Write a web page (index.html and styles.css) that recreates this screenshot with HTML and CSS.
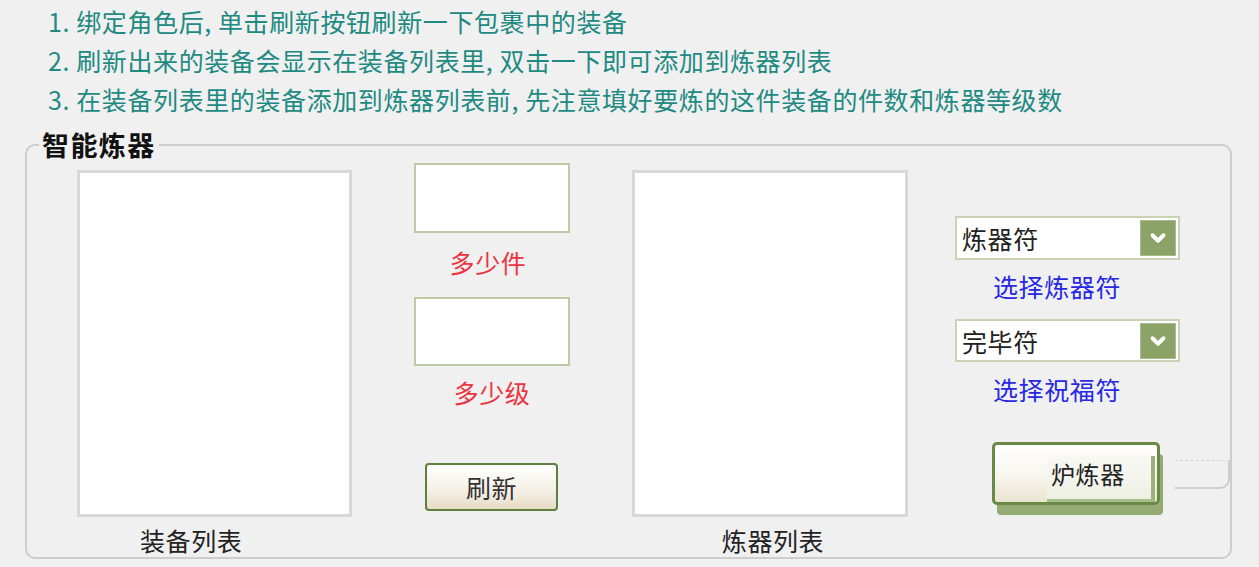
FILE: index.html
```html
<!DOCTYPE html>
<html lang="zh-CN">
<head>
<meta charset="utf-8">
<title>智能炼器</title>
<link rel="stylesheet" href="styles.css">
</head>
<body>
<div class="notes">
  <p>1. 绑定角色后, 单击刷新按钮刷新一下包裹中的装备</p>
  <p>2. 刷新出来的装备会显示在装备列表里, 双击一下即可添加到炼器列表</p>
  <p>3. 在装备列表里的装备添加到炼器列表前, 先注意填好要炼的这件装备的件数和炼器等级数</p>
</div>
<fieldset class="panel">
  <legend class="panel-title">智能炼器</legend>
  <div class="panel-body">
    <div class="col col-equip">
      <div class="listbox"></div>
      <div class="list-label label-equip">装备列表</div>
    </div>
    <div class="col col-count">
      <div class="textbox"></div>
      <div class="hint">多少件</div>
      <div class="textbox textbox-2"></div>
      <div class="hint hint-2">多少级</div>
      <button class="btn btn-refresh">刷新</button>
    </div>
    <div class="col col-refine">
      <div class="listbox"></div>
      <div class="list-label label-refine">炼器列表</div>
    </div>
    <div class="col col-options">
      <div class="select">
        <span class="select-text">炼器符</span>
        <span class="select-arrow"><svg viewBox="0 0 20 20" width="22" height="22"><polyline points="5,7.5 10,12.5 15,7.5" fill="none" stroke="#fff" stroke-width="3.6" stroke-linecap="round" stroke-linejoin="round"/></svg></span>
      </div>
      <div class="option-label">选择炼器符</div>
      <div class="select select-2">
        <span class="select-text">完毕符</span>
        <span class="select-arrow"><svg viewBox="0 0 20 20" width="22" height="22"><polyline points="5,7.5 10,12.5 15,7.5" fill="none" stroke="#fff" stroke-width="3.6" stroke-linecap="round" stroke-linejoin="round"/></svg></span>
      </div>
      <div class="option-label option-label-2">选择祝福符</div>
      <button class="btn btn-start"><span class="btn-start-text">炉炼器</span></button>
    </div>
  </div>
  <div class="ghost-corner"></div>
</fieldset>
</body>
</html>
```
FILE: styles.css
```css
html, body {
  margin: 0;
  padding: 0;
  background: #f0f0f0;
}
body {
  width: 1259px;
  height: 567px;
  overflow: hidden;
  font-family: "Noto Sans CJK SC", "Noto Sans", sans-serif;
  font-size: 25px;
  letter-spacing: 0.6px;
  color: #222;
}

.notes {
  padding: 2px 0 0 48px;
  color: #1e8a82;
}
.notes p {
  margin: 0;
  height: 39px;
  line-height: 39px;
  white-space: nowrap;
}

.panel {
  position: relative;
  margin: 11px 0 0 25px;
  width: 1207px;
  box-sizing: border-box;
  padding: 0;
  border: 2px solid #cdcdcd;
  border-radius: 10px;
  min-inline-size: 0;
}
.panel-title {
  margin-left: 12px;
  padding: 0 3px;
  font-size: 27px;
  font-weight: bold;
  line-height: 30px;
  letter-spacing: 1.4px;
  color: #111;
}

.panel-body {
  display: flex;
  align-items: flex-start;
  height: 397px;
}

.col {
  display: flex;
  flex-direction: column;
}

.listbox {
  box-sizing: border-box;
  height: 347px;
  background: #fff;
  border: 3px solid #d8d8d8;
}
.list-label {
  height: 26px;
  line-height: 26px;
  margin-top: 10px;
  white-space: nowrap;
}

.col-equip {
  margin: 10px 0 0 50px;
  width: 275px;
}
.label-equip {
  padding-left: 63px;
}

.col-count {
  margin: 3px 0 0 62px;
  width: 156px;
}
.textbox {
  box-sizing: border-box;
  height: 70px;
  background: #fff;
  border: 2px solid #bccaa6;
}
.textbox-2 {
  margin-top: 22px;
  height: 69px;
}
.hint {
  margin-top: 16px;
  height: 26px;
  line-height: 26px;
  text-align: center;
  color: #ec3340;
  padding-right: 8px;
}
.hint-2 {
  margin-top: 13px;
  padding-right: 0;
}

.btn {
  font-family: inherit;
  letter-spacing: inherit;
  cursor: pointer;
  padding: 0;
}
.btn-refresh {
  margin: 58px 0 0 11px;
  width: 133px;
  height: 48px;
  font-size: 25px;
  color: #333;
  border: 2px solid #5d7e3c;
  border-radius: 4px;
  background: linear-gradient(#ffffff, #f4efe4 60%, #e6dcc6);
}

.col-refine {
  margin: 10px 0 0 62px;
  width: 276px;
}
.label-refine {
  text-align: center;
  padding-left: 6px;
}

.col-options {
  margin: 56px 0 0 47px;
  width: 225px;
}
.select {
  box-sizing: border-box;
  height: 44px;
  display: flex;
  align-items: center;
  justify-content: space-between;
  background: #fff;
  border: 2px solid #c8d3b4;
  padding: 0 2px 0 5px;
}
.select-2 {
  margin-top: 20px;
  height: 43px;
}
.select-text {
  color: #222;
  line-height: 30px;
}
.select-arrow {
  width: 36px;
  height: 36px;
  box-sizing: border-box;
  display: flex;
  align-items: center;
  justify-content: center;
  background: #8ba366;
  border: 1px solid #a9bb8c;
}
.option-label {
  margin-top: 13px;
  height: 26px;
  line-height: 26px;
  padding-left: 38px;
  color: #2828e4;
  white-space: nowrap;
}
.option-label-2 {
  margin-top: 14px;
}

.btn-start {
  margin: 40px 0 0 37px;
  width: 168px;
  height: 63px;
  box-sizing: border-box;
  border: 3px solid #688a44;
  border-radius: 5px;
  background: linear-gradient(#ffffff, #f7f5ee 55%, #ebe4d0);
  box-shadow: 4px 11px 0 -1px #94ab73;
  display: flex;
  align-items: flex-end;
  justify-content: flex-end;
  padding: 0;
  color: #222;
  font-size: 24px;
}
.btn-start-text {
  display: block;
  width: 108px;
  height: 46px;
  line-height: 36px;
  padding-left: 4px;
  box-sizing: border-box;
  text-align: left;
  background: linear-gradient(#f8f8f4, #eef0e4);
  border-right: 4px solid #9ab37c;
  border-bottom: 3px solid #a8bd8c;
  margin: 0 2px 0 0;
}

.ghost-corner {
  position: absolute;
  left: 1148px;
  top: 300px;
  width: 53px;
  height: 26px;
  border-top: 1px dashed #d4d4d4;
  border-right: 2px solid #cdcdcd;
  border-bottom: 2px solid #cdcdcd;
  border-bottom-right-radius: 10px;
}
```
